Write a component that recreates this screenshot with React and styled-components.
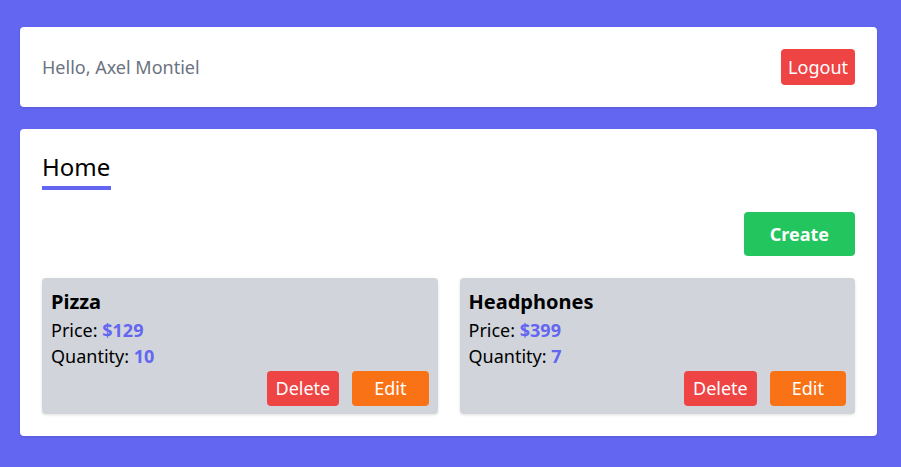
import React from "react";
import styled, { createGlobalStyle } from "styled-components";

const GlobalStyle = createGlobalStyle`
  * {
    box-sizing: border-box;
  }
  body {
    margin: 0;
    background-color: #6366f1;
    font-family: "Noto Sans", "Open Sans", sans-serif;
  }
`;

const Page = styled.div`
  display: flex;
  flex-direction: column;
  gap: 22px;
  padding: 27px 24px 30px 20px;
`;

const Panel = styled.div`
  background-color: #ffffff;
  border-radius: 4px;
  padding: 22px;
  box-shadow: 0 1px 3px rgba(0, 0, 0, 0.12);
`;

const Navbar = styled(Panel)`
  display: flex;
  align-items: center;
  justify-content: space-between;
`;

const Greeting = styled.span`
  color: #6b7280;
  font-size: 18px;
  line-height: 28px;
`;

const Button = styled.button`
  border: none;
  border-radius: 4px;
  color: #ffffff;
  font-family: inherit;
  font-size: 18px;
  line-height: 28px;
  font-weight: ${(p) => (p.bold ? 700 : 400)};
  background-color: ${(p) => p.color};
  padding: ${(p) => p.pad};
  cursor: pointer;
`;

const Title = styled.h1`
  display: inline-block;
  margin: 0;
  font-size: 24px;
  line-height: 32px;
  font-weight: 400;
  color: #000000;
  padding: 0 1px 3px 0;
  border-bottom: 4px solid #6366f1;
`;

const Toolbar = styled.div`
  display: flex;
  justify-content: flex-end;
  margin: 22px 0;
`;

const Grid = styled.div`
  display: grid;
  grid-template-columns: 1fr 1fr;
  gap: 22px;
`;

const Card = styled.div`
  background-color: #d1d5db;
  border-radius: 4px;
  padding: 9px 9px 8px;
  box-shadow: 0 1px 3px rgba(0, 0, 0, 0.12);
  display: flex;
  flex-direction: column;
`;

const CardTitle = styled.h3`
  margin: 0;
  font-size: 20px;
  line-height: 30px;
  font-weight: 700;
  color: #000000;
`;

const Line = styled.p`
  margin: 0;
  font-size: 18px;
  line-height: 26px;
  color: #000000;
`;

const Value = styled.strong`
  color: #6366f1;
  font-weight: 700;
`;

const Actions = styled.div`
  display: flex;
  justify-content: flex-end;
  gap: 13px;
  margin-top: 2px;
`;

const products = [
  { name: "Pizza", price: 129, quantity: 10 },
  { name: "Headphones", price: 399, quantity: 7 },
];

const App = () => {
  return (
    <>
      <GlobalStyle />
      <Page>
        <Navbar>
          <Greeting>Hello, Axel Montiel</Greeting>
          <Button color="#ef4444" pad="4px 7px">
            Logout
          </Button>
        </Navbar>
        <Panel>
          <Title>Home</Title>
          <Toolbar>
            <Button color="#22c55e" pad="8px 26px" bold>
              Create
            </Button>
          </Toolbar>
          <Grid>
            {products.map((product) => (
              <Card key={product.name}>
                <CardTitle>{product.name}</CardTitle>
                <Line>
                  Price: <Value>${product.price}</Value>
                </Line>
                <Line>
                  Quantity: <Value>{product.quantity}</Value>
                </Line>
                <Actions>
                  <Button color="#ef4444" pad="3px 9px 4px">
                    Delete
                  </Button>
                  <Button color="#f97316" pad="3px 22px 4px">
                    Edit
                  </Button>
                </Actions>
              </Card>
            ))}
          </Grid>
        </Panel>
      </Page>
    </>
  );
};

export default App;
